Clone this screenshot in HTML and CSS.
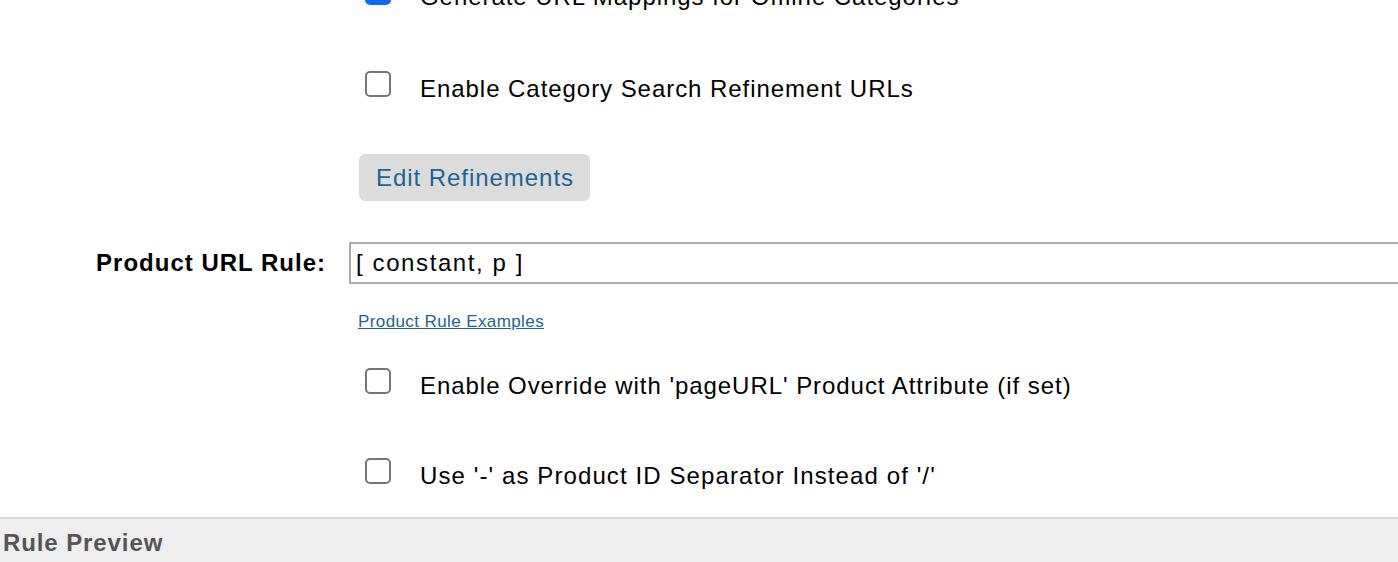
FILE: index.html
```html
<!DOCTYPE html>
<html>
<head>
<meta charset="utf-8">
<link rel="stylesheet" href="styles.css">
</head>
<body>
<div class="page">
  <form class="form">
    <label class="field check-row first">
      <input type="checkbox" class="cb" checked>
      <span class="check-text">Generate URL Mappings for Offline Categories</span>
    </label>
    <label class="field check-row row2">
      <input type="checkbox" class="cb">
      <span class="check-text">Enable Category Search Refinement URLs</span>
    </label>
    <div class="field btn-row">
      <button type="button" class="btn">Edit Refinements</button>
    </div>
    <div class="url-row">
      <div class="url-label">Product URL Rule:</div>
      <input type="text" class="url-input" value="[ constant, p ]">
    </div>
    <div class="field link-row">
      <a href="#" class="link">Product Rule Examples</a>
    </div>
    <label class="field check-row row3">
      <input type="checkbox" class="cb">
      <span class="check-text">Enable Override with 'pageURL' Product Attribute (if set)</span>
    </label>
    <label class="field check-row row4">
      <input type="checkbox" class="cb">
      <span class="check-text wide">Use '-' as Product ID Separator Instead of '/'</span>
    </label>
  </form>
  <div class="section-bar">Rule Preview</div>
</div>
</body>
</html>
```

FILE: styles.css
```css
html, body {
  margin: 0;
  padding: 0;
  background: #ffffff;
  overflow: hidden;
}
body {
  font-family: "Liberation Sans", Arial, Helvetica, sans-serif;
  color: #000;
  width: 1398px;
  height: 562px;
}
.page {
  display: flex;
  flex-direction: column;
}
.form {
  display: flex;
  flex-direction: column;
  margin-top: -21px;
}
.field {
  margin-left: 349px;
}
.check-row {
  display: flex;
  align-items: flex-start;
  height: 32px;
  padding-left: 16px;
}
.cb {
  appearance: none;
  -webkit-appearance: none;
  width: 26px;
  height: 26px;
  margin: 0;
  border: 2px solid #767676;
  border-radius: 5px;
  background: #fff;
  box-sizing: border-box;
  flex: none;
}
.cb:checked {
  background: #0b6cf0;
  border-color: #0b6cf0;
}
.check-text {
  margin-left: 29px;
  margin-top: 4px;
  font-size: 24px;
  line-height: 28px;
  letter-spacing: 0.95px;
  white-space: nowrap;
}
.check-text.wide {
  letter-spacing: 1.1px;
}
.row2 { margin-top: 60px; }
.btn-row { margin-top: 51px; }
.btn {
  margin-left: 10px;
  height: 47px;
  padding: 0 16px 0 17px;
  border: none;
  border-radius: 6px;
  background: #dcdcdc;
  color: #1d6398;
  font-family: "Liberation Sans", Arial, Helvetica, sans-serif;
  font-size: 24px;
  letter-spacing: 0.95px;
  line-height: 27px;
}
.url-row {
  display: flex;
  align-items: center;
  margin-top: 41px;
}
.url-label {
  width: 349px;
  flex: none;
  box-sizing: border-box;
  padding-right: 23px;
  text-align: right;
  font-weight: bold;
  font-size: 24px;
  letter-spacing: 1px;
}
.url-input {
  width: 1200px;
  flex: none;
  height: 42px;
  box-sizing: border-box;
  border: 2px solid #a6aab1;
  padding: 0 5px;
  margin: 0;
  font-family: "Liberation Sans", Arial, Helvetica, sans-serif;
  font-size: 24px;
  letter-spacing: 1.6px;
  color: #000;
  outline: none;
}
.link-row {
  margin-top: 28px;
  padding-left: 9px;
  line-height: 20px;
}
.link {
  color: #1d6398;
  font-size: 17px;
  letter-spacing: 0.4px;
  text-decoration: underline;
}
.row3 { margin-top: 36px; }
.row4 { margin-top: 58px; }
.section-bar {
  margin-top: 27px;
  border-top: 2px solid #d9d9d9;
  background: #eeeeee;
  height: 60px;
  padding-left: 3px;
  padding-top: 7px;
  box-sizing: border-box;
  font-weight: bold;
  font-size: 24px;
  letter-spacing: 0.9px;
  line-height: 34px;
  color: #555555;
}
```
